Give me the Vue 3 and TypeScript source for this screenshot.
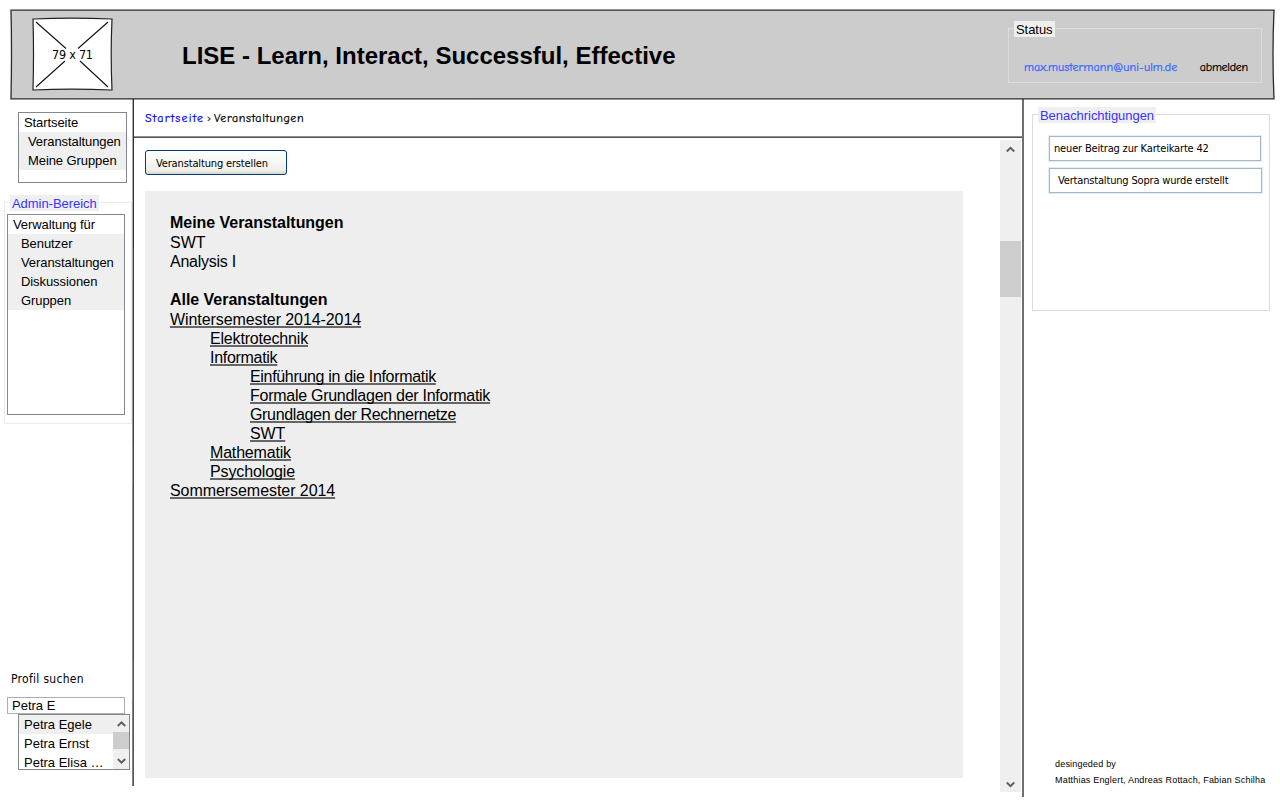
<script setup lang="ts">
interface Entry {
  label: string
  level: number
  tracking: number
}

const navItems: string[] = ['Veranstaltungen', 'Meine Gruppen']
const adminItems: string[] = ['Benutzer', 'Veranstaltungen', 'Diskussionen', 'Gruppen']
const results: string[] = ['Petra Egele', 'Petra Ernst', 'Petra Elisa …']
const allEvents: Entry[] = [
  { label: 'Wintersemester 2014-2014', level: 0, tracking: -0.08 },
  { label: 'Elektrotechnik', level: 1, tracking: -0.18 },
  { label: 'Informatik', level: 1, tracking: -0.3 },
  { label: 'Einführung in die Informatik', level: 2, tracking: -0.32 },
  { label: 'Formale Grundlagen der Informatik', level: 2, tracking: -0.27 },
  { label: 'Grundlagen der Rechnernetze', level: 2, tracking: -0.34 },
  { label: 'SWT', level: 2, tracking: -0.1 },
  { label: 'Mathematik', level: 1, tracking: -0.18 },
  { label: 'Psychologie', level: 1, tracking: -0.12 },
  { label: 'Sommersemester 2014', level: 0, tracking: -0.06 },
]
</script>

<template>
  <div class="page">
    <header class="header">
      <svg class="header-frame" width="1280" height="110" viewBox="0 0 1280 110">
        <path d="M11 10.200 Q600 9.600 1274 10.200 Q1272 55 1274 98.800 Q600 98.300 11 98.800 Q12 50 11 10.200Z" fill="#ccc" stroke="#2a2a2a" stroke-width="1.3" />
      </svg>
      <svg class="logo" width="82" height="74" viewBox="0 0 82 74">
        <path d="M2 2 Q40 .2 81 2 Q79.4 37 81 73 Q40 71.4 2 73 Q3 37 2 2Z" fill="#fff" stroke="#222" stroke-width="1.2" />
        <path d="M5 5 35 31.500M77 5 47 31.500M5 70 34 44M77 70 49 44" stroke="#111" stroke-width="1.1" fill="none" />
        <text x="41.500" y="42" text-anchor="middle" textLength="41" class="logo-text">79 x 71</text>
      </svg>
      <h1 class="title">LISE - Learn, Interact, Successful, Effective</h1>
      <section class="group status">
        <span class="legend">Status</span>
        <div class="account">
          <a class="mail">max.mustermann@uni-ulm.de</a>
          <a class="logout">abmelden</a>
        </div>
      </section>
    </header>

    <div class="body">
      <aside class="left">
        <ul class="list nav">
          <li class="head">Startseite</li>
          <li v-for="n in navItems" :key="n" class="sub">{{ n }}</li>
        </ul>
        <section class="group admin">
          <span class="legend blue">Admin-Bereich</span>
          <ul class="list admin-list">
            <li class="head">Verwaltung für</li>
            <li v-for="a in adminItems" :key="a" class="sub">{{ a }}</li>
          </ul>
        </section>
        <div class="search-label">Profil suchen</div>
        <div class="search">Petra E</div>
        <div class="dropdown">
          <ul class="results">
            <li v-for="r in results" :key="r">{{ r }}</li>
          </ul>
          <div class="mini-scroll">
            <svg width="9" height="6" viewBox="0 0 9 6"><path d="M0.800 5 4.500 1.400 8.200 5" /></svg>
            <span class="mini-thumb"></span>
            <svg width="9" height="6" viewBox="0 0 9 6"><path d="M0.800 1 4.500 4.600 8.200 1" /></svg>
          </div>
        </div>
      </aside>
      <svg class="divider" width="3" height="698" viewBox="0 0 3 698"><path d="M1.300 0 Q.3 350 1.100 687" /></svg>

      <main class="main">
        <nav class="crumbs">
          <a class="crumb-link">Startseite</a><span class="sep">›</span><span class="crumb">Veranstaltungen</span>
        </nav>
        <svg class="rule" width="888" height="3" viewBox="0 0 888 3"><path d="M0 1.100 Q440 1.900 888 1.100" /></svg>
        <div class="work">
          <div class="content">
            <button class="create"><span>Veranstaltung erstellen</span></button>
            <div class="panel">
              <h2>Meine Veranstaltungen</h2>
              <p>SWT</p>
              <p class="analysis">Analysis I</p>
              <h2 class="second">Alle Veranstaltungen</h2>
              <p v-for="e in allEvents" :key="e.label" :class="'level' + e.level">
                <a :style="{ letterSpacing: e.tracking + 'px' }">{{ e.label }}</a>
              </p>
            </div>
          </div>
          <div class="scroll">
            <svg width="9" height="7" viewBox="0 0 9 6"><path d="M0.800 5 4.500 1.400 8.200 5" /></svg>
            <span class="thumb"></span>
            <svg class="down" width="9" height="7" viewBox="0 0 9 6"><path d="M0.800 1 4.500 4.600 8.200 1" /></svg>
          </div>
        </div>
      </main>
      <svg class="divider" width="3" height="698" viewBox="0 0 3 698"><path d="M2 0 Q1 350 2 698" /></svg>

      <aside class="right">
        <section class="group notes">
          <span class="legend blue">Benachrichtigungen</span>
          <div class="note first"><span>neuer Beitrag zur Karteikarte 42</span></div>
          <div class="note next"><span>Vertanstaltung Sopra wurde erstellt</span></div>
        </section>
        <footer class="credits">
          <div class="by">desingeded by</div>
          <div class="names">Matthias Englert, Andreas Rottach, Fabian Schilha</div>
        </footer>
      </aside>
    </div>
  </div>
</template>

<style>
body {
  margin: 0;
  background: #fff;
}
</style>

<style scoped>
.page {
  width: 1280px;
  height: 800px;
  overflow: hidden;
  background: #fff;
  color: #000;
  font-family: 'Liberation Sans', Arial, sans-serif;
  font-size: 13px;
  white-space: nowrap;
}
.page * {
  box-sizing: border-box;
}
ul,
p,
h1,
h2 {
  margin: 0;
  padding: 0;
  list-style: none;
}
.header {
  position: relative;
  display: flex;
  height: 99px;
  padding-left: 31px;
}
.header-frame {
  position: absolute;
  left: 0;
  top: 0;
}
.logo {
  position: relative;
  margin-top: 17px;
  flex: none;
}
.logo-text {
  font: 12.5px 'DejaVu Sans Condensed', 'DejaVu Sans', sans-serif;
}
.title {
  position: relative;
  margin: 42px 0 0 69px;
  width: 826px;
  font-size: 24px;
  line-height: 28px;
}
.group {
  position: relative;
  border: 1px solid #dcdcdc;
}
.legend {
  display: block;
  width: max-content;
  height: 16px;
  margin: -8px 0 0 5px;
  padding: 0 2px;
  line-height: 17px;
  background: #efefef;
  letter-spacing: -0.05px;
}
.blue {
  color: #3b32ff;
}
.status {
  width: 254px;
  height: 55px;
  margin-top: 28px;
}
.account {
  display: flex;
  justify-content: space-between;
  margin: 22px 13px 0 15px;
  line-height: 16px;
  font-family: 'Comic Sans MS', 'Comic Neue', 'Open Sans', sans-serif;
  font-size: 12px;
  -webkit-text-stroke: 0.25px currentColor;
}
.mail {
  color: #3366ff;
  letter-spacing: 0.09px;
}
.logout {
  letter-spacing: -0.25px;
}
.body {
  display: flex;
  height: 698px;
}
.left {
  width: 132px;
  flex: none;
}
.divider {
  flex: none;
  position: relative;
}
.divider path,
.rule path {
  fill: none;
  stroke: #222;
  stroke-width: 1.3;
}
.list {
  border: 1px solid #828790;
  background: #fff;
}
.list li {
  height: 19px;
  line-height: 19px;
  padding-left: 5px;
  letter-spacing: -0.08px;
}
.list .sub {
  background: #efefef;
  padding-left: 9px;
}
.nav {
  width: 109px;
  height: 71px;
  margin: 13px 0 0 18px;
}
.admin {
  width: 128px;
  height: 222px;
  margin: 19px 0 0 4px;
  border-color: #ebebeb;
}
.admin-list {
  width: 118px;
  height: 201px;
  margin: 3px 0 0 2px;
}
.list.admin-list .sub {
  padding-left: 13px;
}
.search-label {
  margin: 246px 0 0 11px;
  height: 18px;
  line-height: 18px;
  font-family: 'DejaVu Sans Condensed', 'DejaVu Sans', sans-serif;
  font-size: 12px;
  letter-spacing: 0.3px;
}
.search {
  width: 118px;
  height: 17px;
  margin: 9px 0 0 7px;
  padding-left: 4px;
  border: 1px solid #abadb3;
  line-height: 16px;
}
.dropdown {
  display: flex;
  width: 112px;
  height: 56px;
  margin-left: 18px;
  border: 1px solid #828790;
  overflow: hidden;
}
.results {
  width: 94px;
}
.results li {
  height: 19px;
  line-height: 19px;
  padding-left: 5px;
}
.results li:first-child {
  background: #efefef;
}
.mini-scroll {
  display: flex;
  flex-direction: column;
  align-items: center;
  width: 16px;
  height: 54px;
  padding-top: 6px;
  background: #efefef;
}
.mini-thumb {
  width: 16px;
  height: 17px;
  margin: 5px 0 9px;
  background: #cdcdcd;
  flex: none;
}
.mini-scroll svg,
.scroll svg {
  flex: none;
  overflow: visible;
}
.mini-scroll path,
.scroll path {
  fill: none;
  stroke: #606060;
  stroke-width: 2;
}
.main {
  width: 886px;
  flex: none;
}
.crumbs {
  display: flex;
  height: 37px;
  padding: 11px 0 0 10px;
  line-height: 16px;
  font-family: 'Comic Sans MS', 'Comic Neue', 'Open Sans', sans-serif;
  font-size: 12px;
  -webkit-text-stroke: 0.25px currentColor;
}
.crumb-link {
  width: 62px;
  color: #00f;
  letter-spacing: 1.25px;
}
.crumb {
  letter-spacing: 0.6px;
}
.sep {
  width: 7px;
  color: #444;
}
.rule {
  display: block;
  margin-left: -1px;
}
.work {
  display: flex;
  justify-content: space-between;
  padding: 1px 0 0 10px;
}
.content {
  padding-top: 10px;
}
.create {
  display: block;
  width: 142px;
  height: 25px;
  padding: 2px 0 0 10px;
  border: 1px solid #003c74;
  border-radius: 3px;
  background: linear-gradient(#fff, #f0f0ea 84%, #d8d2c6);
  text-align: left;
  font-family: 'DejaVu Sans Condensed', 'DejaVu Sans', sans-serif;
  font-size: 11px;
  color: #000;
}
.create span {
  letter-spacing: -0.15px;
}
.panel {
  width: 818px;
  height: 587px;
  margin-top: 16px;
  padding: 22px 0 0 25px;
  background: #eee;
  font-size: 16px;
  line-height: 19px;
}
.panel h2 {
  font-size: 16px;
  margin-bottom: 1px;
  letter-spacing: -0.04px;
}
.panel .second {
  margin-top: 19px;
}
.panel p {
  height: 19px;
}
.panel .analysis {
  letter-spacing: -0.25px;
}
.panel a {
  text-decoration: underline #666;
  text-decoration-thickness: 1.5px;
  text-decoration-skip-ink: none;
  text-underline-offset: 1px;
}
.panel .level1 {
  padding-left: 40px;
}
.panel .level2 {
  padding-left: 80px;
}
.scroll {
  display: flex;
  flex-direction: column;
  align-items: center;
  width: 21px;
  height: 652px;
  padding-top: 6px;
  background: #efefef;
}
.thumb {
  width: 21px;
  height: 56px;
  margin-top: 88px;
  background: #cdcdcd;
  flex: none;
}
.scroll .down {
  margin: auto 0 4px;
}
.right {
  display: flex;
  flex-direction: column;
  justify-content: space-between;
  width: 254px;
  padding: 15px 0 9px 8px;
}
.notes {
  width: 238px;
  height: 197px;
}
.note {
  width: 212px;
  height: 25px;
  border: 1px solid #a3b8cf;
  outline: 1px solid #e4ecf4;
  line-height: 24px;
  padding-left: 4px;
  font-family: 'DejaVu Sans Condensed', 'DejaVu Sans', sans-serif;
  font-size: 11px;
}
.note span {
  letter-spacing: -0.17px;
}
.first {
  margin: 13px 0 0 16px;
}
.next {
  width: 213px;
  margin: 7px 0 0 16px;
  padding-left: 8px;
}
.credits {
  margin-left: 23px;
  font-size: 9px;
  line-height: 16px;
  letter-spacing: 0.19px;
}
</style>
